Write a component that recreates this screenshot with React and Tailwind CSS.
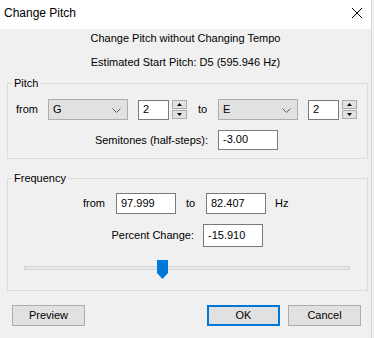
import React from 'react';

function Chevron() {
  return (
    <svg width="9" height="5" viewBox="0 0 9 5" className="absolute right-[6px] top-[8px]">
      <polyline points="0.5,0.5 4.5,4.5 8.5,0.5" fill="none" stroke="#606060" strokeWidth="1" />
    </svg>
  );
}

function Combo({ value }) {
  return (
    <div className="relative w-[80px] h-[21px] border border-[#adadad] bg-[#e1e1e1] pl-[4px] flex items-center">
      <span>{value}</span>
      <Chevron />
    </div>
  );
}

function Field({ value, w = 'w-[60px]', h = 'h-[21px]' }) {
  return (
    <div className={`${w} ${h} border border-[#7a7a7a] bg-white pl-[4px] flex items-center pb-[1px]`}>
      {value}
    </div>
  );
}

function Spin() {
  return (
    <div className="ml-[3px] mt-[1px] flex flex-col gap-[1px] self-start">
      <div className="w-[15px] h-[9px] border border-[#adadad] bg-[#e1e1e1] flex items-center justify-center">
        <svg width="5" height="3" viewBox="0 0 5 3"><polygon points="0,3 2.5,0 5,3" fill="#000" /></svg>
      </div>
      <div className="w-[15px] h-[9px] border border-[#adadad] bg-[#e1e1e1] flex items-center justify-center">
        <svg width="5" height="3" viewBox="0 0 5 3"><polygon points="0,0 2.5,3 5,0" fill="#000" /></svg>
      </div>
    </div>
  );
}

function Group({ title, className, children }) {
  return (
    <div className={`relative ml-[7px] w-[361px] border border-[#dcdcdc] ${className}`}>
      <span className="absolute -top-[9px] left-[4px] px-[2px] bg-[#f0f0f0] leading-[16px]">{title}</span>
      {children}
    </div>
  );
}

function Button({ label, primary }) {
  return (
    <div
      className={`w-[73px] h-[21px] bg-[#e1e1e1] flex items-center justify-center ${
        primary ? 'border-2 border-[#0078d7]' : 'border border-[#adadad]'
      }`}
    >
      {label}
    </div>
  );
}

export default function App() {
  return (
    <div className="w-[374px] h-[338px] flex bg-[#f0f0f0] font-['Liberation_Sans',Arial,sans-serif] text-[11px] text-black">
      <div className="w-[372px] h-[338px] border-r border-[#d9d9d9] flex flex-col">
        <div className="h-[29px] bg-white flex items-center pb-[4px] pl-[4px] pr-[9px]">
          <span className="text-[12px]">Change Pitch</span>
          <svg width="10" height="10" viewBox="0 0 10 10" className="ml-auto">
            <line x1="0" y1="0" x2="10" y2="10" stroke="#000" strokeWidth="1" />
            <line x1="10" y1="0" x2="0" y2="10" stroke="#000" strokeWidth="1" />
          </svg>
        </div>

        <div className="pt-[1px] text-center leading-[16px]">Change Pitch without Changing Tempo</div>
        <div className="mt-[8px] text-center leading-[16px]">Estimated Start Pitch: D5 (595.946 Hz)</div>

        <Group title="Pitch" className="mt-[13px] h-[76px] pt-[15px] pl-[8px]">
          <div className="flex items-center h-[21px]">
            <span className="w-[32px]">from</span>
            <Combo value="G" />
            <div className="ml-[10px]"><Field value="2" w="w-[31px]" h="h-[20px]" /></div>
            <Spin />
            <span className="ml-[11px] w-[20px]">to</span>
            <Combo value="E" />
            <div className="ml-[10px]"><Field value="2" w="w-[31px]" h="h-[20px]" /></div>
            <Spin />
          </div>
          <div className="mt-[10px] flex items-center">
            <span className="w-[192px] text-right">Semitones (half-steps):</span>
            <div className="ml-[10px]"><Field value="-3.00" h="h-[20px]" /></div>
          </div>
        </Group>

        <Group title="Frequency" className="mt-[19px] h-[113px] pt-[14px] pl-[8px]">
          <div className="flex items-center">
            <span className="ml-[67px] w-[33px]">from</span>
            <Field value="97.999" />
            <span className="ml-[10px] w-[20px]">to</span>
            <Field value="82.407" />
            <span className="ml-[9px]">Hz</span>
          </div>
          <div className="mt-[10px] flex items-center">
            <span className="w-[178px] text-right">Percent Change:</span>
            <div className="ml-[9px]"><Field value="-15.910" h="h-[23px]" /></div>
          </div>
          <div className="relative mt-[13px] ml-[8px] w-[326px] h-[19px]">
            <div className="absolute top-[6px] left-0 w-[326px] h-[4px] bg-[#e7e7e7] border border-[#d6d6d6]" />
            <svg width="11" height="19" viewBox="0 0 11 19" className="absolute top-0 left-[133px]">
              <polygon points="0,0 11,0 11,13 5.5,19 0,13" fill="#0078d7" />
            </svg>
          </div>
        </Group>

        <div className="mt-[14px] flex pl-[12px]">
          <Button label="Preview" />
          <div className="ml-auto mr-[10px] flex gap-[8px]">
            <Button label="OK" primary />
            <Button label="Cancel" />
          </div>
        </div>
      </div>
      <div className="w-[1px] bg-[#f0f0f0]" />
    </div>
  );
}
